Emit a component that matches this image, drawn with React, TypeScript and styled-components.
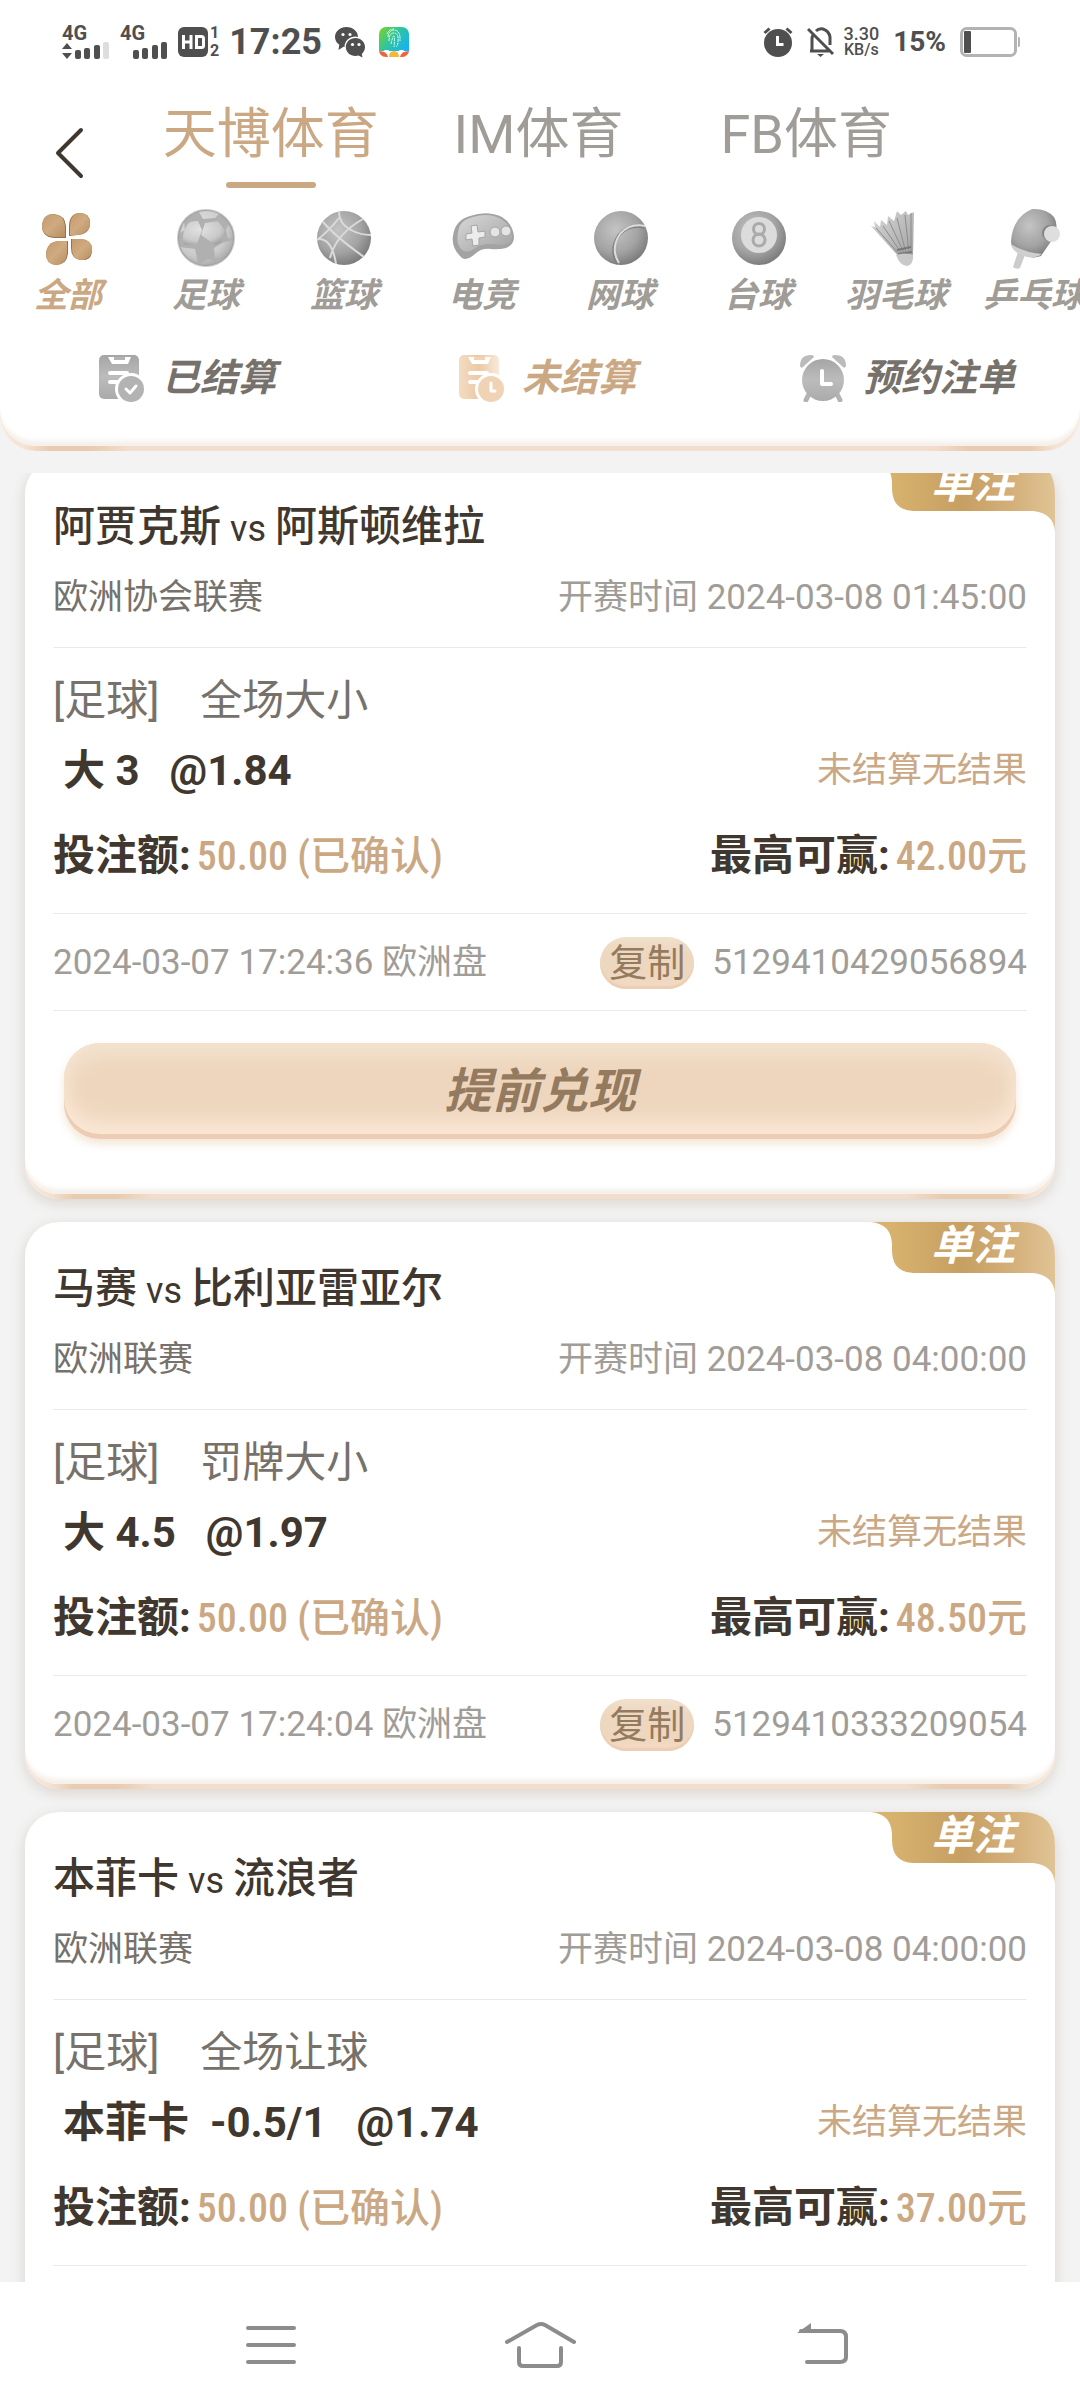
import React, { useLayoutEffect, useRef } from 'react';
import styled, { createGlobalStyle, css } from 'styled-components';

const color = {
  gold: '#cba884',
  dark: '#40372f',
  mid: '#76716b',
  soft: '#a09c97',
  status: '#4f4f4f',
  page: '#f3f3f3',
  line: '#eaeaea',
  brown: '#947a5f',
};

const sans = `Roboto, "Noto Sans CJK SC", sans-serif`;
const narrow = `"Roboto Condensed", "Liberation Sans Narrow", Roboto, "Noto Sans CJK SC", sans-serif`;

const GlobalStyle = createGlobalStyle`
  *, *::before, *::after { box-sizing: border-box; }
  body { margin: 0; background: ${color.page}; font-family: ${sans}; color: ${color.dark}; }
  button { border: 0; padding: 0; margin: 0; background: none; font: inherit; color: inherit; cursor: pointer; }
  h2, p { margin: 0; padding: 0; }
  svg { display: block; flex: none; }
`;

const slanted = css`
  font-style: italic;
  font-weight: 700;
`;

const Screen = styled.div`
  height: 100vh;
  display: flex;
  flex-direction: column;
  overflow: hidden;
`;

/* Panels share a white face resting on a thin peach edge */
const edge = css`
  padding-bottom: 5px;
  background: linear-gradient(90deg, #f8ebe0 0, #f5e3d3 24px, #e8cbb0 50px, #e8cbb0 90px, #f3decd 130px,
    #f3decd calc(100% - 150px), #e8cbb0 calc(100% - 110px), #e8cbb0 calc(100% - 50px), #f5e3d3 calc(100% - 24px), #f8ebe0 100%);
`;
const face = css`
  background: #fff;
  box-shadow: inset 0 -8px 4px -3px #f5f0eb;
`;

const Header = styled.header`
  ${edge}
  border-radius: 0 0 36px 36px;
  flex: none;
`;
const HeaderFace = styled.div`
  ${face}
  border-radius: 0 0 36px 36px;
  padding-bottom: 30px;
`;

const StatusBar = styled.div`
  height: 84px;
  padding: 0 60px 0 62px;
  display: flex;
  align-items: center;
  justify-content: space-between;
  color: ${color.status};
`;
const StatusGroup = styled.div<{ $gap: number }>`
  display: flex;
  align-items: center;
  gap: ${(p) => p.$gap}px;
`;
const SignalCell = styled.div`
  width: 48px;
  height: 34px;
  display: flex;
  flex-direction: column;
  justify-content: space-between;
  font-size: 20px;
  line-height: 16px;
  font-weight: 700;
`;
const Clock = styled.time`
  font-size: 36px;
  line-height: 40px;
  font-weight: 700;
`;
const SimStack = styled.span`
  display: flex;
  flex-direction: column;
  font-size: 16px;
  line-height: 18px;
  font-weight: 700;
  text-align: center;
`;
const HdRow = styled.div`
  display: flex;
  align-items: center;
  gap: 2px;
`;
const Speed = styled.span`
  display: flex;
  flex-direction: column;
  text-align: center;
  font-size: 18px;
  line-height: 16px;
  font-weight: 500;
`;
const SpeedUnit = styled.small`
  font-size: 16px;
`;
const Percent = styled.span`
  font-size: 28px;
  line-height: 32px;
  font-weight: 700;
`;

const TopNav = styled.nav`
  display: flex;
  align-items: flex-end;
  padding-right: 140px;
`;
const BackButton = styled.button`
  width: 137px;
  height: 70px;
  padding-left: 52px;
  display: flex;
  align-items: center;
`;
const Venues = styled.div`
  flex: 1;
  display: grid;
  grid-template-columns: repeat(3, 1fr);
`;
const Venue = styled.button<{ $active?: boolean }>`
  height: 104px;
  display: flex;
  flex-direction: column;
  align-items: center;
  justify-content: flex-end;
  gap: 9px;
  font-size: 54px;
  line-height: 76px;
  color: ${(p) => (p.$active ? color.gold : color.soft)};
  &::after {
    content: '';
    width: 90px;
    height: 6px;
    flex: none;
    border-radius: 3px;
    background: ${(p) => (p.$active ? color.gold : 'transparent')};
  }
`;

const Sports = styled.div`
  display: flex;
  overflow: hidden;
  margin-top: 18px;
`;
const Sport = styled.button<{ $active?: boolean }>`
  ${slanted}
  flex: 0 0 138px;
  padding-right: 2px;
  display: flex;
  flex-direction: column;
  align-items: center;
  gap: 2px;
  font-size: 34px;
  line-height: 46px;
  white-space: nowrap;
  color: ${(p) => (p.$active ? color.gold : color.soft)};
`;

const Filters = styled.div`
  display: grid;
  grid-template-columns: repeat(3, 1fr);
  margin-top: 22px;
`;
const Filter = styled.button<{ $active?: boolean }>`
  ${slanted}
  height: 76px;
  padding-left: 14px;
  display: flex;
  align-items: center;
  justify-content: center;
  gap: 16px;
  font-size: 38px;
  line-height: 52px;
  color: ${(p) => (p.$active ? color.gold : color.mid)};
`;

const Slips = styled.main`
  flex: 1;
  min-height: 0;
  margin-top: 22px;
  padding: 0 25px;
  display: flex;
  flex-direction: column;
  gap: 23px;
  overflow-y: auto;
  scrollbar-width: none;
  &::-webkit-scrollbar { display: none; }
`;
const Slip = styled.article`
  ${edge}
  position: relative;
  flex: none;
  border-radius: 34px;
  box-shadow: 0 4px 14px rgba(120, 90, 60, 0.2);
`;
const SlipFace = styled.div<{ $roomy?: boolean }>`
  ${face}
  border-radius: 34px;
  padding: 37px 28px ${(p) => (p.$roomy ? 55 : 12)}px;
`;
const Ribbon = styled.div`
  position: absolute;
  top: 0;
  right: 0;
  width: 184px;
  height: 71px;
`;
const RibbonText = styled.span`
  ${slanted}
  position: absolute;
  top: 0;
  right: 40px;
  font-size: 42px;
  line-height: 48px;
  color: #fff;
`;
const Match = styled.h2`
  height: 60px;
  display: flex;
  align-items: baseline;
  gap: 9px;
  font-size: 42px;
  line-height: 60px;
  font-weight: 500;
`;
const Versus = styled.span`
  font-size: 36px;
  font-weight: 400;
`;
const Row = styled.div<{ $top: number }>`
  height: 52px;
  display: flex;
  align-items: center;
  justify-content: space-between;
  margin-top: ${(p) => p.$top}px;
  font-size: 35px;
  line-height: 52px;
`;
const League = styled.span`
  color: ${color.mid};
`;
const Muted = styled.span`
  color: ${color.soft};
`;
const Section = styled.section`
  margin-top: 23px;
  padding: 27px 0 31px;
  border: solid ${color.line};
  border-width: 1px 0;
`;
const Market = styled.p`
  height: 52px;
  display: flex;
  align-items: center;
  gap: 41px;
  font-size: 42px;
  line-height: 52px;
  color: ${color.mid};
`;
const Pick = styled.span`
  padding-left: 10px;
  display: flex;
  gap: 30px;
  font-size: 42px;
  font-weight: 700;
  white-space: pre;
`;
const Outcome = styled.span`
  color: ${color.gold};
`;
const Amount = styled.span`
  display: flex;
  align-items: baseline;
  gap: 6px;
  font-size: 42px;
  font-weight: 700;
`;
const Money = styled.span`
  font-family: ${narrow};
  font-size: 40px;
  font-weight: 500;
  color: ${color.gold};
`;
const Foot = styled.div`
  height: 96px;
  padding-top: 2px;
  display: flex;
  align-items: center;
  justify-content: space-between;
  font-size: 35px;
  line-height: 52px;
  color: ${color.soft};
`;
const Ticket = styled.span`
  display: flex;
  align-items: center;
  gap: 18px;
`;
const CopyButton = styled.button`
  height: 52px;
  padding: 0 9px;
  border-radius: 26px;
  font-size: 38px;
  line-height: 52px;
  color: ${color.brown};
  background: linear-gradient(#f0e0cc, #eed7bf 30%, #eed7bf 75%, #f3dac4);
  box-shadow: inset 0 -3px 1px #ecceb4;
`;
const CashArea = styled.div`
  border-top: 1px solid ${color.line};
  padding: 32px 11px 0;
`;
const CashButton = styled.button`
  ${slanted}
  display: flex;
  align-items: center;
  justify-content: center;
  width: 100%;
  height: 96px;
  padding-top: 2px;
  border-radius: 36px;
  font-size: 48px;
  line-height: 60px;
  color: ${color.brown};
  background: #eed6be;
  box-shadow: inset 0 -5px 0 #eccdb3, inset 0 -24px 20px -6px #fae7d5, inset 0 14px 20px -4px #f3e3d1,
    inset 0 0 22px 4px #f3dfc6, 0 5px 8px rgba(220, 180, 140, 0.35);
`;

const SystemNav = styled.nav`
  flex: none;
  height: 126px;
  padding: 0 132px;
  display: grid;
  grid-template-columns: repeat(3, 1fr);
  background: #fff;
`;
const SystemButton = styled.button`
  display: flex;
  align-items: center;
  justify-content: center;
`;

/* ---------- status bar drawings ---------- */

const Bars = ({ arrows, faded }: { arrows?: boolean; faded?: boolean }) => (
  <svg width="48" height="17" viewBox="0 0 48 17" fill={color.status}>
    {arrows && <path d="M0 7 5 1l5 6zM0 11h10l-5 6z" />}
    <rect x="13" y="8" width="6" height="9" rx="2" />
    <rect x="22" y="6" width="6" height="11" rx="2" />
    <rect x="32" y="3" width="6" height="14" rx="2" />
    <rect x="41" y="0" width="6" height="17" rx="2" fill={faded ? '#ddd' : color.status} />
  </svg>
);

const HdMark = () => (
  <svg width="30" height="30" viewBox="0 0 30 30">
    <rect width="30" height="30" rx="6" fill={color.status} />
    <path d="M5.500 8v14M13 8v14M6 15h7M18.500 9.500h5a2 2 0 0 1 2 2v7a2 2 0 0 1-2 2h-5z" fill="none" stroke="#fff" strokeWidth="3" />
  </svg>
);

const ChatMark = () => (
  <svg width="31" height="31" viewBox="0 0 31 31">
    <path d="M11.500 0C5 0 0 4.500 0 10c0 3.200 1.700 6 4.300 7.800L3.500 23l5-3.300c1 .2 2 .3 3 .3 6.400 0 11.500-4.500 11.500-10S18 0 11.500 0z" fill={color.status} />
    <ellipse cx="20.500" cy="20" rx="11" ry="10.500" fill="#fff" />
    <path d="M20.500 11C25.800 11 30 15 30 20c0 2.800-1.200 5.200-3.200 6.900l.7 3.600-4-2c-1 .3-2 .4-3 .4-5.400 0-9.700-4-9.700-9s4.300-8.900 9.700-8.900z" fill={color.status} />
    <g fill="#fff">
      <circle cx="8" cy="7.500" r="1.600" /><circle cx="15" cy="7.500" r="1.600" />
      <circle cx="17.500" cy="17.500" r="1.600" /><circle cx="24" cy="17.500" r="1.600" />
    </g>
  </svg>
);

const AppMark = () => (
  <svg width="30" height="30" viewBox="0 0 30 30">
    <defs>
      <linearGradient id="app" x1="0" y1="0" x2="1" y2=".8">
        <stop offset="0" stopColor="#7ed321" /><stop offset=".5" stopColor="#2cc3a8" /><stop offset="1" stopColor="#12b0ff" />
      </linearGradient>
      <clipPath id="appClip"><rect width="30" height="30" rx="7" /></clipPath>
    </defs>
    <g clipPath="url(#appClip)">
      <rect width="30" height="30" fill="url(#app)" />
      <path d="M0 24h30v6H0z" fill="#fff" />
      <path d="M0 24q8 0 9 6H0zM30 24q-8 0-9 6h9z" fill="#f0643c" />
      <path d="M10 30q0-6 5-6t5 6z" fill="#f5b83c" />
      <path d="M5 23l3 4 2-4zM20 23l2 4 3-4z" fill="#fff" />
      <g fill="none" stroke="#d6fff0" strokeWidth="1" strokeDasharray="3 .7">
        <path d="M9 10q1-7 6-7t6 7v4M10 14q0-8 5-8t4 9q0 3-2 5M12 17q2-9 3-8t0 11M8 7q2-5 7-5" />
      </g>
    </g>
  </svg>
);

const AlarmMark = () => (
  <svg width="30" height="30" viewBox="0 0 30 30" fill="none" stroke={color.status}>
    <circle cx="15" cy="16" r="14" fill={color.status} stroke="none" />
    <path d="M1.500 6l5-4.500M28.500 6l-5-4.500" strokeWidth="3" />
    <path d="M14.500 9v8.500h6" stroke="#fff" strokeWidth="3" />
  </svg>
);

const MuteMark = () => (
  <svg width="28" height="30" viewBox="0 0 28 30" fill="none" stroke={color.status} strokeWidth="3">
    <path d="M3 24h19M5 24V12q0-2 1-4M9 4q3-3 7-2 6 2 7 8v8M1 2l25 25" />
    <path d="M10 27h7l-3.500 3z" fill={color.status} stroke="none" />
  </svg>
);

const BatteryMark = () => (
  <svg width="60" height="30" viewBox="0 0 60 30">
    <rect x="1.500" y="1.500" width="54" height="27" rx="5" fill="#fff" stroke="#b3b3b3" strokeWidth="3" />
    <rect x="4" y="4" width="7" height="22" rx="1" fill={color.status} />
    <path d="M58 10h1q1 0 1 2v6q0 2-1 2h-1z" fill="#b3b3b3" />
  </svg>
);

/* ---------- sport drawings ---------- */

const HiddenSvg = styled.svg`
  position: absolute;
`;

const Defs = () => (
  <HiddenSvg width="0" height="0" aria-hidden="true">
    <defs>
      <radialGradient id="ball" cx=".4" cy=".35" r=".7">
        <stop offset="0" stopColor="#c4c4c4" /><stop offset=".6" stopColor="#a3a3a3" /><stop offset="1" stopColor="#777" />
      </radialGradient>
      <radialGradient id="ballLight" cx=".4" cy=".35" r=".7">
        <stop offset="0" stopColor="#e2e2e2" /><stop offset=".7" stopColor="#cacaca" /><stop offset="1" stopColor="#a5a5a5" />
      </radialGradient>
      <linearGradient id="petal" x1="0" y1="0" x2="1" y2="1">
        <stop offset="0" stopColor="#c39a6d" /><stop offset=".5" stopColor="#d0aa80" /><stop offset="1" stopColor="#b78e61" />
      </linearGradient>
      <linearGradient id="grey" x1="0" y1="0" x2="1" y2="1">
        <stop offset="0" stopColor="#d8d8d8" /><stop offset="1" stopColor="#a2a2a2" />
      </linearGradient>
      <linearGradient id="sheet" x1="0" y1="0" x2="0" y2="1">
        <stop offset="0" stopColor="#a5a5a5" /><stop offset=".5" stopColor="#bcbcbc" /><stop offset="1" stopColor="#aaa" />
      </linearGradient>
      <linearGradient id="sheetGold" x1="0" y1="0" x2="1" y2="0">
        <stop offset="0" stopColor="#f3dcc3" /><stop offset=".5" stopColor="#ecc9a4" /><stop offset="1" stopColor="#f9eadb" />
      </linearGradient>
      <linearGradient id="ribbon" x1="0" y1="0" x2="1" y2="0">
        <stop offset=".1" stopColor="#d8b36e" /><stop offset=".5" stopColor="#c69f62" /><stop offset=".75" stopColor="#d3ae78" /><stop offset="1" stopColor="#e0c495" />
      </linearGradient>
    </defs>
  </HiddenSvg>
);

const Art = ({ children }: { children: React.ReactNode }) => (
  <svg width="64" height="64" viewBox="0 0 64 64">{children}</svg>
);

const AllArt = () => (
  <Art>
    <g fill="#9a7045">
      <path d="M30 32H18Q6 31 6 20 7 8 18 8 29 9 30 20z" /><path d="M33 30V19Q34 7 44 7t10 10q0 11-12 12z" />
      <path d="M32 35v12q-1 12-12 12-10-1-10-11 1-12 13-13z" /><path d="M35 33h10q11 1 11 11t-9 10q-12 0-12-12z" />
    </g>
    <g fill="url(#petal)">
      <path d="M29 31H18Q6 30 6 19 7 8 17 8 28 9 29 20z" /><path d="M34 29V19Q35 7 44 7t10 10q0 10-12 12z" />
      <path d="M31 35v12q-1 12-11 12-10-1-10-11 1-12 12-13z" /><path d="M36 33h10q10 1 10 10t-9 11q-11 0-11-11z" />
    </g>
  </Art>
);

const FootballArt = () => (
  <Art>
    <circle cx="32" cy="32" r="28" fill="#b0b0b0" />
    <g fill="url(#ballLight)">
      <path d="M12 21q2-7 12-6l4 9-5 14-13 1q-3-9 2-18zM31 17l13-2 7 9-4 13-6 2-14-10z" />
      <path d="M6 41l15 2 3 14Q10 53 6 41zM25 6q11-4 20 2l-4 4-12 1zM48 37l11-3q0 12-9 19l-9-1-1-10zM27 57l7-4 8 3q-6 5-15 3zM54 19q5 5 5 12l-5 2-2-9zM10 16l-4 11 5-3z" />
    </g>
    <circle cx="32" cy="32" r="28" fill="none" stroke="#8b8b8b" strokeOpacity=".45" strokeWidth="2" />
  </Art>
);

const BasketballArt = () => (
  <Art>
    <circle cx="32" cy="32" r="27" fill="url(#ball)" />
    <g fill="none" stroke="#dadada" strokeWidth="2">
      <path d="M18 52Q24 28 51 13M27 6q0 12 12 18 9 5 20 5M11 16q13 15 41 35M6 33q14-1 18 25M5 34q12-9 22-22" />
    </g>
  </Art>
);

const GamepadArt = () => (
  <Art>
    <path d="M3 30Q5 14 20 10q17-6 32 1 11 7 12 20 0 8-8 11-8 2-15 1-10-1-16 5-8 7-13 4Q1 42 3 30z" fill="#a3a3a3" />
    <path d="M8 27Q9 14 23 11q16-5 28 2 11 7 11 19-1 6-9 7-8-1-14-1-9 0-15 5-8 5-13 0-5-6-3-16z" fill="url(#grey)" />
    <path d="M21 20l6-1 1 7 7-1v6l-6 1v7l-6 1-1-7-6 1v-6l6-1z" fill="#ececec" stroke="#a5a5a5" />
    <circle cx="45" cy="26" r="5" fill="#e4e4e4" stroke="#a5a5a5" /><circle cx="56" cy="25" r="5" fill="#e4e4e4" stroke="#a5a5a5" />
  </Art>
);

const TennisArt = () => (
  <Art>
    <circle cx="33" cy="32" r="27" fill="url(#ball)" />
    <path d="M56 21Q41 18 31 29q-10 15-1 29" fill="none" stroke="#808080" strokeWidth="3" />
    <path d="M57 20Q42 17 32 28q-10 15-1 29" fill="none" stroke="#dcdcdc" strokeWidth="2" />
  </Art>
);

const PoolArt = () => (
  <Art>
    <circle cx="33" cy="32" r="27" fill="url(#ball)" />
    <circle cx="33" cy="29" r="18" fill="#dcdcdc" />
    <g fill="none" stroke="#aaa" strokeWidth="3"><circle cx="33" cy="23" r="5.500" /><circle cx="33" cy="34" r="6" /></g>
  </Art>
);

const ShuttleArt = () => (
  <Art>
    <path d="M7 20l4 1-1-6 6 6 1-7 6 5 1-9 6 5 3-10 4 4 5-4 2 4 6-3-1 44-13 2z" fill="url(#grey)" />
    <path d="M12 22l24 27M19 20l19 28M25 15l15 32M33 12l9 35M41 9l4 38M47 7v38" stroke="#8c8c8c" strokeWidth="1" fill="none" />
    <path d="M33 44l14-3M34 48l14-2" stroke="#777" strokeWidth="2" />
    <path d="M32 49q8-3 17 0 1 9-6 11-7 0-11-11z" fill="#c9c9c9" />
  </Art>
);

const PaddleArt = () => (
  <Art>
    <path d="M16 46l7 3-5 13q-4 2-7-1z" fill="#ccc" />
    <path d="M9 36Q10 12 30 3q14-1 22 8 5 8 0 20L39 50q-10 4-21-3-9-4-9-11z" fill="url(#ball)" />
    <path d="M9 38q12 8 31 10-8 6-21 1-9-4-10-11z" fill="#cfcfcf" />
    <circle cx="48" cy="27" r="8" fill="#858585" /><circle cx="50" cy="28" r="8" fill="#dedede" />
  </Art>
);

/* ---------- filter drawings ---------- */

const SheetIcon = ({ fill, disc, children }: { fill: string; disc: string; children: React.ReactNode }) => (
  <svg width="48" height="48" viewBox="0 0 48 48">
    <rect x="1" y="1" width="40" height="44" rx="5" fill={fill} />
    <path d="M10 3h23l-3 7H14z" fill="#fff" /><path d="M16 3h11v3H16z" fill={disc} />
    <path d="M12 19h17M12 28h9" stroke="#fff" strokeWidth="4" strokeLinecap="round" />
    <circle cx="33" cy="35" r="16" fill="#fff" />
    <circle cx="33" cy="35" r="13" fill={disc} />
    <g fill="none" stroke="#fff" strokeWidth="3" strokeLinecap="round" strokeLinejoin="round">{children}</g>
  </svg>
);

const ReserveIcon = () => (
  <svg width="48" height="48" viewBox="0 0 48 48">
    <path d="M1 12Q1 1 12 1q3 0 3 2L4 13q-2 2-3-1zM47 12Q47 1 36 1q-3 0-3 2l11 10q2 2 3-1z" fill="#bbb" />
    <path d="M10 40l-3 6M38 40l3 6" stroke="#b3b3b3" strokeWidth="5" strokeLinecap="round" />
    <circle cx="24" cy="26" r="21" fill="url(#sheet)" />
    <path d="M23 17v13h9" fill="none" stroke="#fff" strokeWidth="4" strokeLinecap="round" strokeLinejoin="round" />
  </svg>
);

/* ---------- content ---------- */

const venues = ['天博体育', 'IM体育', 'FB体育'];
const sports = [
  { name: '全部', art: <AllArt /> },
  { name: '足球', art: <FootballArt /> },
  { name: '篮球', art: <BasketballArt /> },
  { name: '电竞', art: <GamepadArt /> },
  { name: '网球', art: <TennisArt /> },
  { name: '台球', art: <PoolArt /> },
  { name: '羽毛球', art: <ShuttleArt /> },
  { name: '乒乓球', art: <PaddleArt /> },
];
const filters = [
  { name: '已结算', icon: <SheetIcon fill="url(#sheet)" disc="#b3b3b3"><path d="M28 35l4 4 6-7" /></SheetIcon> },
  { name: '未结算', icon: <SheetIcon fill="url(#sheetGold)" disc="#f0d3b4"><path d="M33 29v8h4" /></SheetIcon> },
  { name: '预约注单', icon: <ReserveIcon /> },
];

interface Bet {
  home: string; away: string; league: string; kickoff: string; market: string;
  pick: string; odds: string; win: string; placed?: string; ticket?: string; cashOut?: boolean;
}
const bets: Bet[] = [
  { home: '阿贾克斯', away: '阿斯顿维拉', league: '欧洲协会联赛', kickoff: '2024-03-08 01:45:00', market: '全场大小', pick: '大 3', odds: '@1.84', win: '42.00元', placed: '2024-03-07 17:24:36', ticket: '5129410429056894', cashOut: true },
  { home: '马赛', away: '比利亚雷亚尔', league: '欧洲联赛', kickoff: '2024-03-08 04:00:00', market: '罚牌大小', pick: '大 4.5', odds: '@1.97', win: '48.50元', placed: '2024-03-07 17:24:04', ticket: '5129410333209054' },
  { home: '本菲卡', away: '流浪者', league: '欧洲联赛', kickoff: '2024-03-08 04:00:00', market: '全场让球', pick: '本菲卡  -0.5/1', odds: '@1.74', win: '37.00元' },
];

const BetSlip = ({ bet }: { bet: Bet }) => (
  <Slip>
    <SlipFace $roomy={bet.cashOut}>
      <Match>{bet.home}<Versus>vs</Versus>{bet.away}</Match>
      <Row $top={15}>
        <League>{bet.league}</League>
        <Muted>开赛时间 {bet.kickoff}</Muted>
      </Row>
      <Section>
        <Market><span>[足球]</span><span>{bet.market}</span></Market>
        <Row $top={18}>
          <Pick><span>{bet.pick}</span><span>{bet.odds}</span></Pick>
          <Outcome>未结算无结果</Outcome>
        </Row>
        <Row $top={33}>
          <Amount>投注额:<Money>50.00 (已确认)</Money></Amount>
          <Amount>最高可赢:<Money>{bet.win}</Money></Amount>
        </Row>
      </Section>
      <Foot>
        {bet.placed && <span>{bet.placed} 欧洲盘</span>}
        {bet.ticket && <Ticket><CopyButton type="button">复制</CopyButton>{bet.ticket}</Ticket>}
      </Foot>
      {bet.cashOut && <CashArea><CashButton type="button">提前兑现</CashButton></CashArea>}
    </SlipFace>
    <Ribbon>
      <svg width="184" height="71" viewBox="0 0 184 71">
        <path d="M0 0h150q34 0 34 34v37q-2-18-22-20H42Q21 50 21 28V22Q20 2 0 0z" fill="url(#ribbon)" />
      </svg>
      <RibbonText>单注</RibbonText>
    </Ribbon>
  </Slip>
);

export default function App() {
  const listRef = useRef<HTMLElement>(null);
  useLayoutEffect(() => {
    if (listRef.current) listRef.current.scrollTop = 13;
  }, []);

  return (
    <Screen>
      <GlobalStyle />
      <Defs />
      <Header>
        <HeaderFace>
          <StatusBar>
            <StatusGroup $gap={10}>
              <SignalCell>4G<Bars arrows faded /></SignalCell>
              <SignalCell>4G<Bars /></SignalCell>
              <HdRow><HdMark /><SimStack><span>1</span><span>2</span></SimStack></HdRow>
              <StatusGroup $gap={13}>
                <Clock>17:25</Clock>
                <ChatMark />
                <AppMark />
              </StatusGroup>
            </StatusGroup>
            <StatusGroup $gap={14}>
              <AlarmMark />
              <StatusGroup $gap={8}>
                <MuteMark />
                <Speed>3.30<SpeedUnit>KB/s</SpeedUnit></Speed>
              </StatusGroup>
              <Percent>15%</Percent>
              <BatteryMark />
            </StatusGroup>
          </StatusBar>
          <TopNav>
            <BackButton type="button" aria-label="返回">
              <svg width="34" height="54" viewBox="0 0 34 54" fill="none" stroke={color.dark} strokeWidth="4" strokeLinecap="round" strokeLinejoin="round">
                <path d="M29 4 6 27l23 23" />
              </svg>
            </BackButton>
            <Venues>
              {venues.map((v, i) => <Venue key={v} type="button" $active={i === 0}>{v}</Venue>)}
            </Venues>
          </TopNav>
          <Sports>
            {sports.map((s, i) => <Sport key={s.name} type="button" $active={i === 0}>{s.art}{s.name}</Sport>)}
          </Sports>
          <Filters>
            {filters.map((f, i) => <Filter key={f.name} type="button" $active={i === 1}>{f.icon}{f.name}</Filter>)}
          </Filters>
        </HeaderFace>
      </Header>
      <Slips ref={listRef}>
        {bets.map((b) => <BetSlip key={b.home} bet={b} />)}
      </Slips>
      <SystemNav>
        <SystemButton type="button" aria-label="菜单">
          <svg width="72" height="48" viewBox="0 0 72 48" stroke="#8c8c8c" strokeWidth="4" strokeLinecap="round">
            <path d="M16 7h46M16 24h46M16 41h46" />
          </svg>
        </SystemButton>
        <SystemButton type="button" aria-label="主页">
          <svg width="72" height="48" viewBox="0 0 72 48" fill="none" stroke="#8c8c8c" strokeWidth="4" strokeLinecap="round" strokeLinejoin="round">
            <path d="M3 21 33 4q4-2 8 0l29 17M15 27v14q0 4 4 4h34q4 0 4-4V27" />
          </svg>
        </SystemButton>
        <SystemButton type="button" aria-label="后退">
          <svg width="72" height="48" viewBox="0 0 72 48" fill="none" stroke="#8c8c8c" strokeWidth="4" strokeLinecap="round">
            <path d="M25 10h39q6 0 6 6v20q0 5-6 5H31" /><path d="M21 12 35 2v10z" fill="#8c8c8c" stroke="none" />
          </svg>
        </SystemButton>
      </SystemNav>
    </Screen>
  );
}
